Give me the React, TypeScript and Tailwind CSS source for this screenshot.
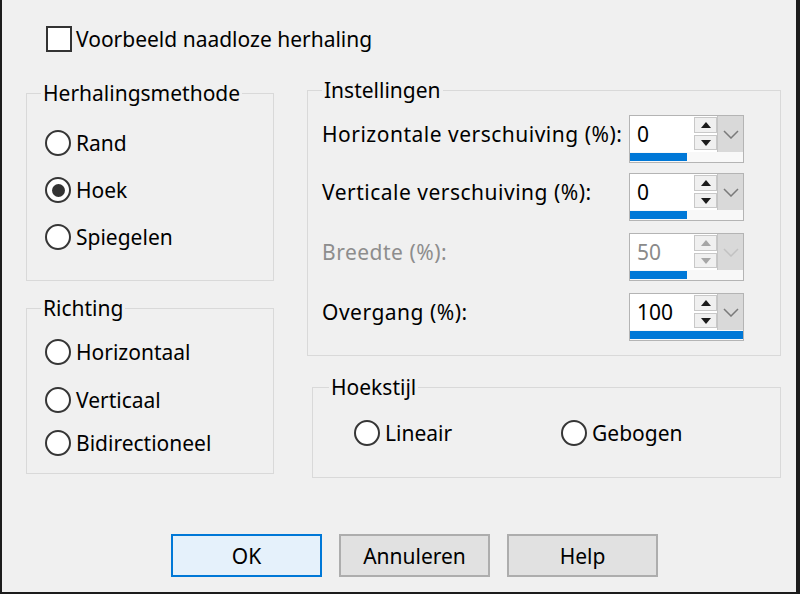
import React from "react";

function Radio({ checked, label, className = "" }: { checked?: boolean; label: string; className?: string }) {
  return (
    <div className={"flex items-center h-[26px] " + className}>
      <div className="w-[26px] h-[26px] rounded-full border-2 border-[#363636] bg-white flex items-center justify-center shrink-0">
        {checked && <div className="w-[13px] h-[13px] rounded-full bg-[#333333]" />}
      </div>
      <span className="ml-[5px] leading-[26px]">{label}</span>
    </div>
  );
}

function Spin({ value, full, disabled }: { value: string; full?: boolean; disabled?: boolean }) {
  const arrow = disabled ? "#a6a6a6" : "#1a1a1a";
  return (
    <div className="w-[115px] h-[48px] border border-[#b4b4b4] bg-white flex flex-col shrink-0">
      <div className="flex h-[36px]">
        <div className={"w-[64px] flex items-center pl-[7px] " + (disabled ? "text-[#8a8a8a]" : "text-black")}>{value}</div>
        <div className="w-[23px] flex flex-col gap-[2px] py-[1px]">
          <div className="h-[16px] border border-[#c8c8c8] bg-[#f0f0f0] flex items-center justify-center">
            <svg width="10" height="6" viewBox="0 0 10 6"><path d="M0 6 L5 0 L10 6 Z" fill={arrow} /></svg>
          </div>
          <div className="h-[15px] border border-[#c8c8c8] bg-[#f0f0f0] flex items-center justify-center">
            <svg width="10" height="6" viewBox="0 0 10 6"><path d="M0 0 L5 6 L10 0 Z" fill={arrow} /></svg>
          </div>
        </div>
        <div className="flex-1 bg-[#d9d9d9] border-l border-[#c4c4c4] flex items-center justify-center">
          <svg width="16" height="9" viewBox="0 0 16 9">
            <path d="M1 1 L8 8 L15 1" fill="none" stroke={disabled ? "#c2c2c2" : "#7a7a7a"} strokeWidth="1.5" />
          </svg>
        </div>
      </div>
      <div className="flex-1 bg-[#f8f8f8] pt-[1px]">
        <div className={"h-[8px] bg-[#0078d7] " + (full ? "w-full" : "w-[57px]")} />
      </div>
    </div>
  );
}

function Row({ label, value, full, disabled }: { label: string; value: string; full?: boolean; disabled?: boolean }) {
  return (
    <div className="flex items-start">
      <div className={"w-[307px] h-[37px] flex items-center tracking-[0.5px] " + (disabled ? "text-[#8d8d8d]" : "")}>{label}</div>
      <Spin value={value} full={full} disabled={disabled} />
    </div>
  );
}

function Btn({ label, primary }: { label: string; primary?: boolean }) {
  return (
    <div
      className={
        "w-[151px] h-[43px] flex items-center justify-center " +
        (primary ? "border-2 border-[#0078d7] bg-[#e5f1fb]" : "border-2 border-[#adadad] bg-[#e1e1e1]")
      }
    >
      {label}
    </div>
  );
}

export default function App() {
  return (
    <div className="w-[800px] h-[594px] bg-[#f0f0f0] border-l-2 border-r-4 border-b-2 border-[#1c1c1c] overflow-hidden font-['Noto_Sans',sans-serif] text-[21px] text-black leading-[24px]">
      <div className="flex flex-col">
        {/* checkbox */}
        <div className="flex items-center pl-[44px] pt-[26px] h-[52px]">
          <div className="w-[26px] h-[26px] border-2 border-[#333333] bg-white shrink-0" />
          <span className="ml-[4px]">Voorbeeld naadloze herhaling</span>
        </div>

        <div className="flex items-start pl-[24px] mt-[26px]">
          {/* left column */}
          <div className="w-[248px] flex flex-col mt-[3px]">
            <fieldset className="border border-[#d9d9d9] pl-[14px] pb-[30px] h-[200px]">
              <legend className="px-[2px] leading-[24px]">Herhalingsmethode</legend>
              <div className="flex flex-col gap-[21px] pt-[25px] pl-[4px]">
                <Radio label="Rand" />
                <Radio label="Hoek" checked />
                <Radio label="Spiegelen" />
              </div>
            </fieldset>
            <fieldset className="border border-[#d9d9d9] pl-[14px] mt-[15px] h-[178px]">
              <legend className="px-[2px] leading-[24px]">Richting</legend>
              <div className="flex flex-col pt-[19px] pl-[4px]">
                <Radio label="Horizontaal" />
                <Radio label="Verticaal" className="mt-[22px]" />
                <Radio label="Bidirectioneel" className="mt-[17px]" />
              </div>
            </fieldset>
          </div>

          {/* right column */}
          <div className="w-[474px] ml-[33px] flex flex-col">
            <fieldset className="border border-[#d9d9d9] pl-[14px] h-[278px]">
              <legend className="px-[2px] leading-[24px]">Instellingen</legend>
              <div className="flex flex-col pt-[13px]">
                <Row label="Horizontale verschuiving (%):" value="0" />
                <div className="mt-[10px]"><Row label="Verticale verschuiving (%):" value="0" /></div>
                <div className="mt-[12px]"><Row label="Breedte (%):" value="50" disabled /></div>
                <div className="mt-[12px]"><Row label="Overgang (%):" value="100" full /></div>
              </div>
            </fieldset>
            <fieldset className="border border-[#d9d9d9] pl-[16px] ml-[5px] mt-[19px] h-[103px]">
              <legend className="px-[2px] leading-[24px]">Hoekstijl</legend>
              <div className="flex pt-[21px] pl-[25px]">
                <Radio label="Lineair" className="w-[207px]" />
                <Radio label="Gebogen" />
              </div>
            </fieldset>
          </div>
        </div>

        <div className="flex pl-[169px] mt-[56px] gap-[17px]">
          <Btn label="OK" primary />
          <Btn label="Annuleren" />
          <Btn label="Help" />
        </div>
      </div>
    </div>
  );
}
